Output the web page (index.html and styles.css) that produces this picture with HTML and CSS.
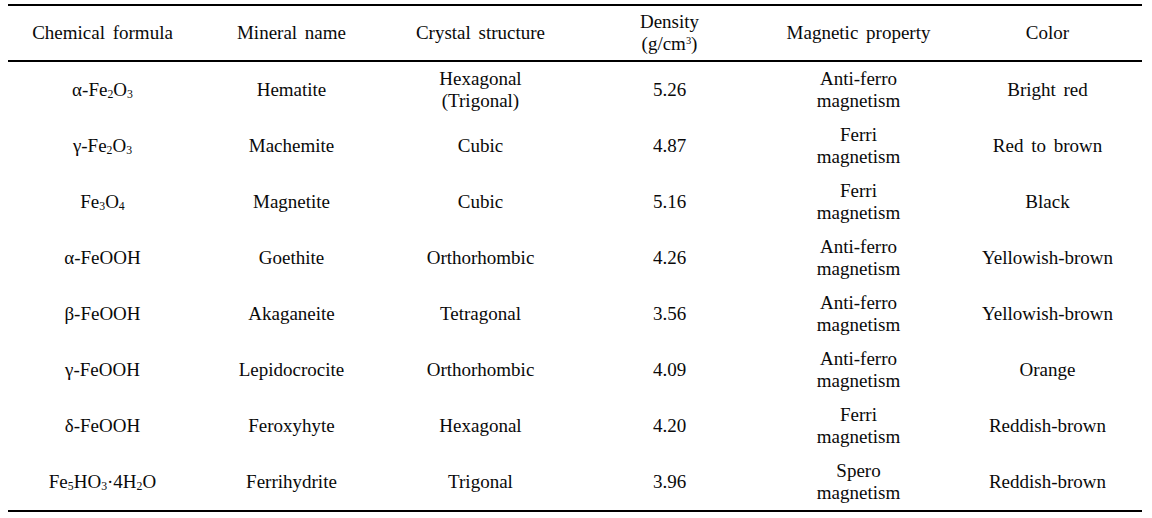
FILE: index.html
```html
<!DOCTYPE html>
<html>
<head>
<meta charset="utf-8">
<link rel="stylesheet" href="styles.css">
</head>
<body>
<table class="tbl">
  <thead>
    <tr>
      <th>Chemical formula</th>
      <th>Mineral name</th>
      <th>Crystal structure</th>
      <th>Density<br>(g/cm<sup>3</sup>)</th>
      <th>Magnetic property</th>
      <th>Color</th>
    </tr>
  </thead>
  <tbody>
    <tr><td>α-Fe<sub>2</sub>O<sub>3</sub></td><td>Hematite</td><td>Hexagonal<br>(Trigonal)</td><td>5.26</td><td>Anti-ferro<br>magnetism</td><td>Bright red</td></tr>
    <tr><td>γ-Fe<sub>2</sub>O<sub>3</sub></td><td>Machemite</td><td>Cubic</td><td>4.87</td><td>Ferri<br>magnetism</td><td>Red to brown</td></tr>
    <tr><td>Fe<sub>3</sub>O<sub>4</sub></td><td>Magnetite</td><td>Cubic</td><td>5.16</td><td>Ferri<br>magnetism</td><td>Black</td></tr>
    <tr><td>α-FeOOH</td><td>Goethite</td><td>Orthorhombic</td><td>4.26</td><td>Anti-ferro<br>magnetism</td><td>Yellowish-brown</td></tr>
    <tr><td>β-FeOOH</td><td>Akaganeite</td><td>Tetragonal</td><td>3.56</td><td>Anti-ferro<br>magnetism</td><td>Yellowish-brown</td></tr>
    <tr><td>γ-FeOOH</td><td>Lepidocrocite</td><td>Orthorhombic</td><td>4.09</td><td>Anti-ferro<br>magnetism</td><td>Orange</td></tr>
    <tr><td>δ-FeOOH</td><td>Feroxyhyte</td><td>Hexagonal</td><td>4.20</td><td>Ferri<br>magnetism</td><td>Reddish-brown</td></tr>
    <tr><td>Fe<sub>5</sub>HO<sub>3</sub>·4H<sub>2</sub>O</td><td>Ferrihydrite</td><td>Trigonal</td><td>3.96</td><td>Spero<br>magnetism</td><td>Reddish-brown</td></tr>
  </tbody>
</table>
</body>
</html>
```

FILE: styles.css
```css
html, body {
  margin: 0;
  padding: 0;
  background: #ffffff;
}
body {
  padding: 4px 10px 0 8px;
  font-family: "Liberation Serif", "Times New Roman", serif;
  font-size: 19px;
  color: #0a0a0a;
}
.tbl {
  width: 1134px;
  border-collapse: separate;
  border-spacing: 0;
  table-layout: fixed;
  border-top: 2px solid #000;
  border-bottom: 2px solid #000;
}
.tbl th, .tbl td {
  box-sizing: border-box;
  width: 189px;
  padding: 0;
  text-align: center;
  vertical-align: middle;
  font-weight: normal;
  line-height: 22px;
  word-spacing: 3px;
}
.tbl th {
  height: 56px;
  border-bottom: 2px solid #000;
}
.tbl td {
  height: 56px;
}
.tbl sub {
  font-size: 0.62em;
  line-height: 0;
  vertical-align: -0.2em;
}
.tbl sup {
  font-size: 0.55em;
  line-height: 0;
  vertical-align: 0.6em;
}
```
